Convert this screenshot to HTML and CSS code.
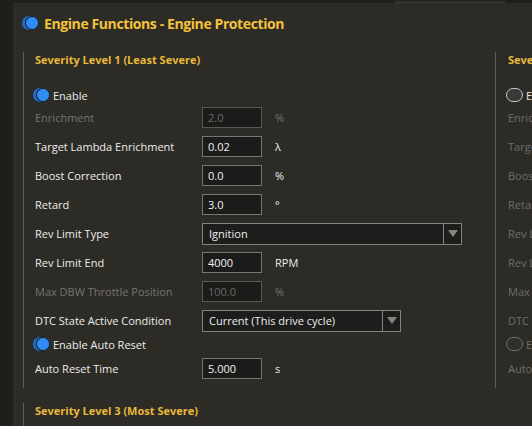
FILE: index.html
```html
<!DOCTYPE html>
<html lang="en">
<head>
    <meta charset="UTF-8">
    <title>Engine Functions - Engine Protection</title>
    <link rel="stylesheet" href="styles.css">
</head>
<body>
    <div class="topbar">
        <div class="tab"></div>
    </div>
    <div class="window">
        <div class="title-row">
            <span class="toggle on"></span>
            <h1>Engine Functions - Engine Protection</h1>
        </div>

        <div class="levels">
            <div class="level">
                <h2>Severity Level 1 (Least Severe)</h2>
                <label class="switch"><span class="toggle on"></span>Enable</label>
                <div class="row disabled">
                    <span class="name">Enrichment</span>
                    <input class="field" type="text" value="2.0" disabled>
                    <span class="unit">%</span>
                </div>
                <div class="row">
                    <span class="name">Target Lambda Enrichment</span>
                    <input class="field" type="text" value="0.02">
                    <span class="unit">λ</span>
                </div>
                <div class="row">
                    <span class="name">Boost Correction</span>
                    <input class="field" type="text" value="0.0">
                    <span class="unit">%</span>
                </div>
                <div class="row">
                    <span class="name">Retard</span>
                    <input class="field" type="text" value="3.0">
                    <span class="unit">°</span>
                </div>
                <div class="row">
                    <span class="name">Rev Limit Type</span>
                    <div class="select wide"><span>Ignition</span><i class="arrow"></i></div>
                </div>
                <div class="row">
                    <span class="name">Rev Limit End</span>
                    <input class="field" type="text" value="4000">
                    <span class="unit">RPM</span>
                </div>
                <div class="row disabled">
                    <span class="name">Max DBW Throttle Position</span>
                    <input class="field" type="text" value="100.0" disabled>
                    <span class="unit">%</span>
                </div>
                <div class="row">
                    <span class="name">DTC State Active Condition</span>
                    <div class="select"><span>Current (This drive cycle)</span><i class="arrow"></i></div>
                </div>
                <label class="switch small"><span class="toggle on"></span>Enable Auto Reset</label>
                <div class="row short">
                    <span class="name">Auto Reset Time</span>
                    <input class="field" type="text" value="5.000">
                    <span class="unit">s</span>
                </div>
            </div>

            <div class="level off">
                <h2>Severity Level 2</h2>
                <label class="switch"><span class="toggle"></span>Enable</label>
                <div class="row"><span class="name">Enrichment</span></div>
                <div class="row"><span class="name">Target Lambda Enrichment</span></div>
                <div class="row"><span class="name">Boost Correction</span></div>
                <div class="row"><span class="name">Retard</span></div>
                <div class="row"><span class="name">Rev Limit Type</span></div>
                <div class="row"><span class="name">Rev Limit End</span></div>
                <div class="row"><span class="name">Max DBW Throttle Position</span></div>
                <div class="row"><span class="name">DTC State Active Condition</span></div>
                <label class="switch small"><span class="toggle dim"></span>Enable Auto Reset</label>
                <div class="row short"><span class="name">Auto Reset Time</span></div>
            </div>
        </div>

        <div class="levels">
            <div class="level">
                <h2>Severity Level 3 (Most Severe)</h2>
            </div>
        </div>
    </div>
</body>
</html>
```

FILE: styles.css
```css
body {
    margin: 0;
    background-color: #1e1e1d;
    font-family: "Open Sans", "Noto Sans", sans-serif;
    font-size: 11px;
    color: #ececec;
    height: 426px;
    overflow: hidden;
}
.topbar {
    height: 3px;
    position: relative;
}
.tab {
    position: absolute;
    left: 395px;
    top: 0;
    width: 110px;
    height: 3px;
    background-color: #262624;
    border-bottom: 1px solid #3a3a37;
    box-sizing: border-box;
}
.window {
    margin-left: 13px;
    background-color: #2c2b26;
    height: 423px;
    overflow: hidden;
    padding-left: 9px;
}
.title-row {
    display: flex;
    align-items: center;
    gap: 5px;
    height: 40px;
}
h1 {
    margin: 0;
    font-size: 14px;
    letter-spacing: -0.4px;
    font-weight: bold;
    color: #f3c23c;
}
.levels {
    display: flex;
    margin-top: 9px;
    margin-left: 1px;
}
.levels + .levels {
    margin-top: 15px;
}
.level {
    box-sizing: border-box;
    flex: 0 0 472px;
    border-left: 1px solid #5d5c57;
    padding-left: 11px;
    padding-bottom: 8px;
    white-space: nowrap;
}
.level.off {
    flex: 0 0 200px;
    padding-left: 12px;
    color: #6e6e6a;
}
.level.off .switch {
    color: #e6e6e6;
}
.level.off .switch.small {
    color: #6e6e6a;
}
h2 {
    margin: 0;
    font-size: 11px;
    font-weight: bold;
    color: #e9b83a;
    line-height: 16px;
}
.switch {
    display: flex;
    align-items: center;
    gap: 3px;
    margin-left: -2px;
    margin-top: 19px;
    height: 16px;
}
.switch.small {
    margin-top: 1px;
}
.toggle {
    display: inline-block;
    box-sizing: border-box;
    width: 17px;
    height: 14px;
    border-radius: 7px;
    border: 1px solid #c4c4c2;
    background-color: #3a3a38;
}
.toggle.dim {
    border-color: #6e6e6a;
    background-color: #302f2b;
}
.toggle.on {
    border: none;
    background: radial-gradient(circle at 10px 7px, #2f8cf5 0, #2f8cf5 5.5px, #1a1a1a 6.5px, #1f6fd0 7.5px);
}
.row {
    display: flex;
    align-items: center;
    height: 29px;
}
.row.short {
    height: 24px;
    margin-top: 4px;
}
.name {
    flex: 0 0 167px;
}
.field {
    box-sizing: border-box;
    width: 60px;
    height: 21px;
    padding: 0 5px;
    background-color: #1b1b1a;
    border: 1px solid #767672;
    color: #f2f2f2;
    font-family: inherit;
    font-size: 11px;
}
.unit {
    padding-left: 13px;
}
.row.disabled {
    color: #75756f;
}
.row.disabled .field {
    color: #6a6a66;
    border-color: #585854;
}
.select {
    box-sizing: border-box;
    display: flex;
    align-items: center;
    width: 199px;
    height: 22px;
    border: 1px solid #858580;
    background-color: #1d1d1c;
    padding-left: 6px;
}
.select.wide {
    width: 260px;
}
.select span {
    flex: 1;
}
.arrow {
    width: 17px;
    height: 20px;
    border-left: 1px solid #858580;
    display: flex;
    align-items: center;
    justify-content: center;
}
.arrow::after {
    content: "";
    border-left: 5px solid transparent;
    border-right: 5px solid transparent;
    border-top: 7px solid #858580;
}
```
